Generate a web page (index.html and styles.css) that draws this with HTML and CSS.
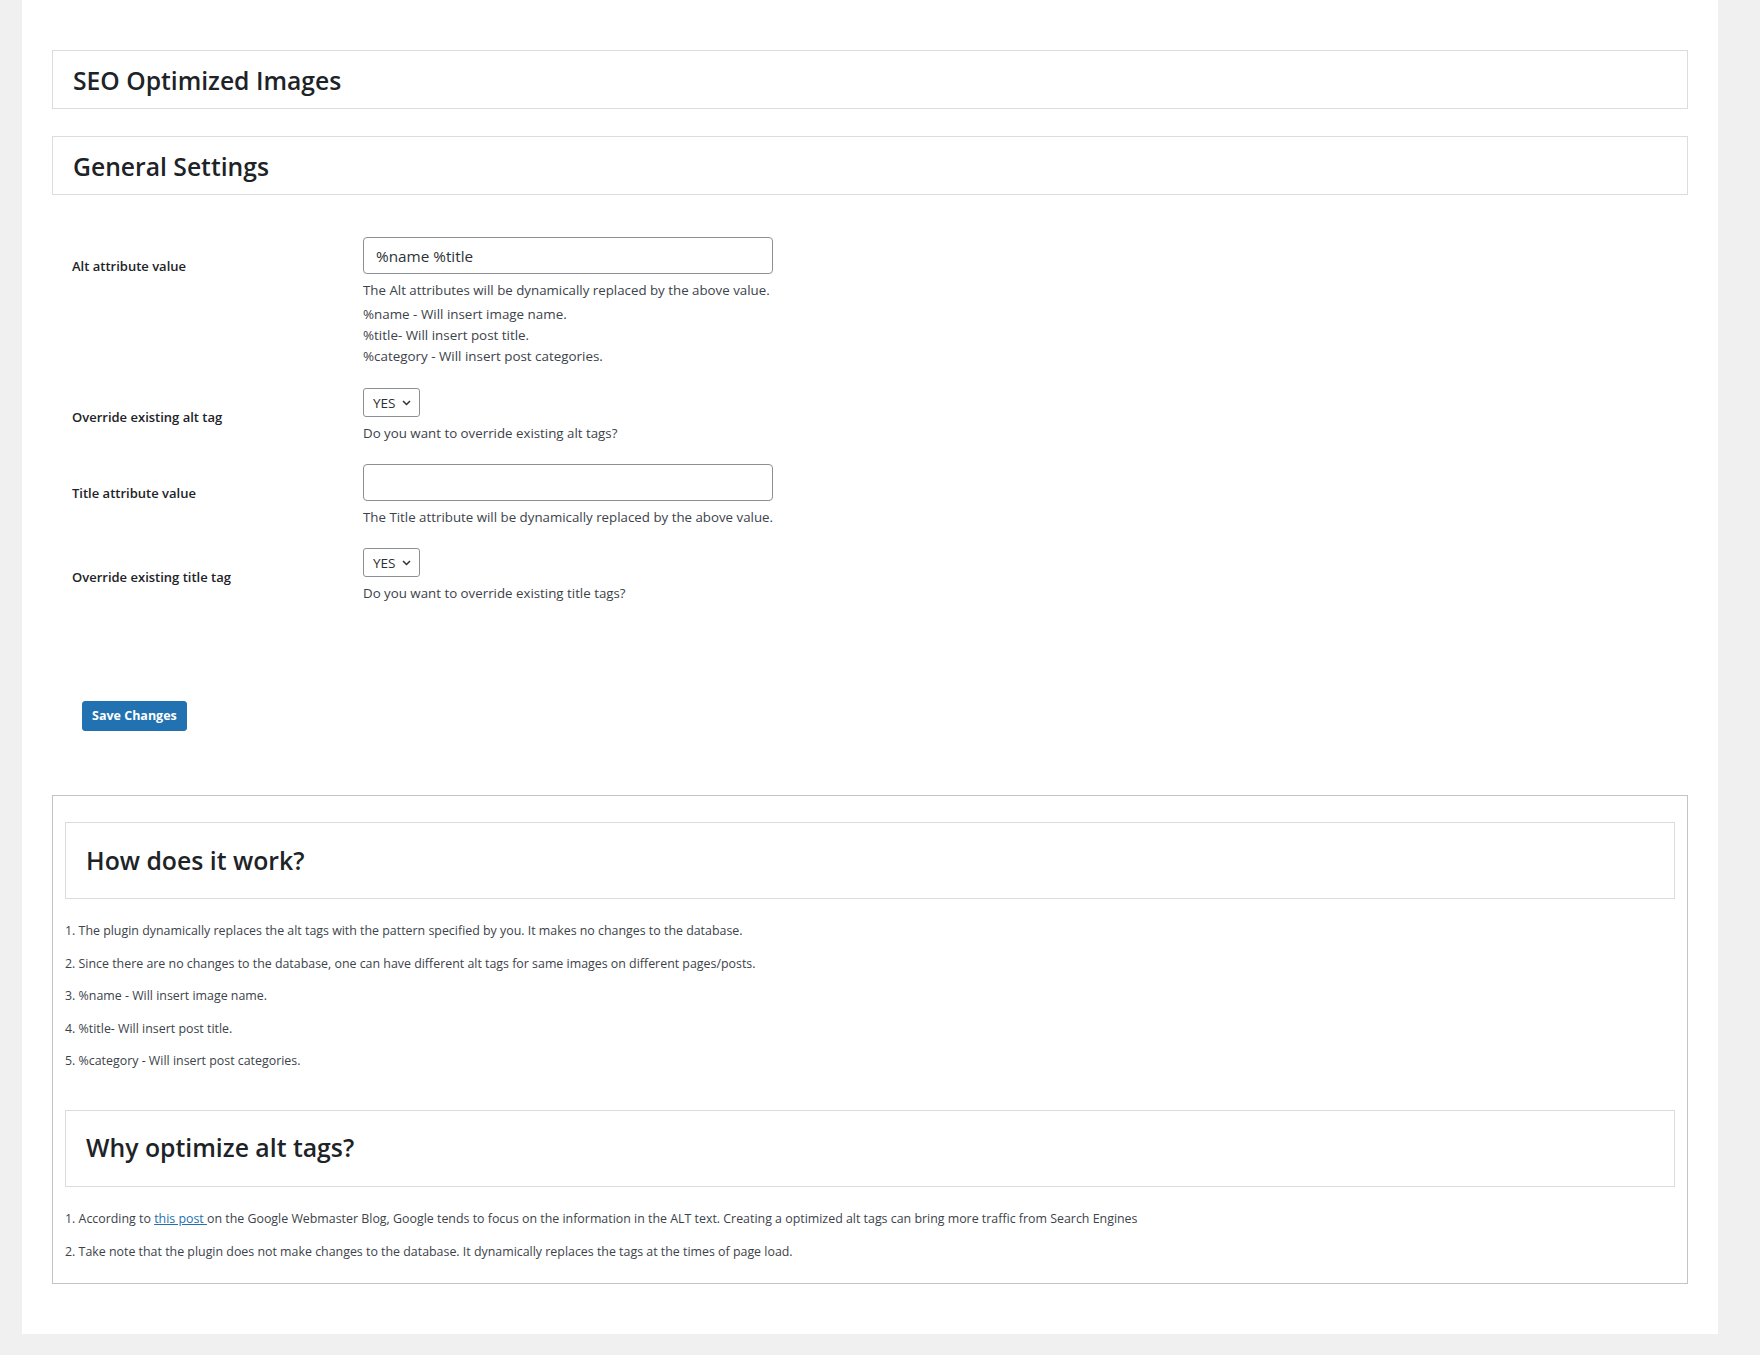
FILE: index.html
```html
<!DOCTYPE html>
<html>
<head>
<meta charset="utf-8">
<title>SEO Optimized Images</title>
<link rel="stylesheet" href="styles.css">
</head>
<body>
<div class="wrap">
  <div class="hbox"><h1 class="htitle">SEO Optimized Images</h1></div>
  <div class="hbox hbox-second"><h2 class="htitle">General Settings</h2></div>

  <form class="settings">
    <div class="row">
      <div class="label">Alt attribute value</div>
      <div class="field">
        <input class="text-input" type="text" value="%name %title">
        <p class="desc">The Alt attributes will be dynamically replaced by the above value.</p>
        <div class="vars">
          <div>%name - Will insert image name.</div>
          <div>%title- Will insert post title.</div>
          <div>%category - Will insert post categories.</div>
        </div>
      </div>
    </div>
    <div class="row">
      <div class="label">Override existing alt tag</div>
      <div class="field">
        <div class="select-wrap">
          <select class="select"><option>YES</option><option>NO</option></select>
          <svg class="chev" width="9" height="6" viewBox="0 0 9 6"><path d="M1 1l3.5 3.5L8 1" fill="none" stroke="#2c3338" stroke-width="1.5"/></svg>
        </div>
        <p class="desc">Do you want to override existing alt tags?</p>
      </div>
    </div>
    <div class="row">
      <div class="label">Title attribute value</div>
      <div class="field">
        <input class="text-input" type="text" value="">
        <p class="desc">The Title attribute will be dynamically replaced by the above value.</p>
      </div>
    </div>
    <div class="row">
      <div class="label">Override existing title tag</div>
      <div class="field">
        <div class="select-wrap">
          <select class="select"><option>YES</option><option>NO</option></select>
          <svg class="chev" width="9" height="6" viewBox="0 0 9 6"><path d="M1 1l3.5 3.5L8 1" fill="none" stroke="#2c3338" stroke-width="1.5"/></svg>
        </div>
        <p class="desc">Do you want to override existing title tags?</p>
      </div>
    </div>
    <div class="submit-row">
      <button class="btn" type="button">Save Changes</button>
    </div>
  </form>

  <div class="info">
    <div class="ibox"><h2 class="ititle">How does it work?</h2></div>
    <div class="ilist">
      <p>1. The plugin dynamically replaces the alt tags with the pattern specified by you. It makes no changes to the database.</p>
      <p>2. Since there are no changes to the database, one can have different alt tags for same images on different pages/posts.</p>
      <p>3. %name - Will insert image name.</p>
      <p>4. %title- Will insert post title.</p>
      <p>5. %category - Will insert post categories.</p>
    </div>
    <div class="ibox ibox-second"><h2 class="ititle">Why optimize alt tags?</h2></div>
    <div class="ilist ilist-last">
      <p>1. According to <a href="#">this post </a>on the Google Webmaster Blog, Google tends to focus on the information in the ALT text. Creating a optimized alt tags can bring more traffic from Search Engines</p>
      <p>2. Take note that the plugin does not make changes to the database. It dynamically replaces the tags at the times of page load.</p>
    </div>
  </div>
</div>
</body>
</html>
```

FILE: styles.css
```css
html, body {
  margin: 0;
  padding: 0;
  background: #f0f0f1;
  font-family: "Open Sans", "Noto Sans", "Liberation Sans", sans-serif;
  color: #3c434a;
}

.wrap {
  margin-left: 22px;
  width: 1696px;
  box-sizing: border-box;
  background: #fff;
  padding: 50px 30px 50px 30px;
}

.hbox {
  height: 59px;
  box-sizing: border-box;
  border: 1px solid #dcdcde;
  display: flex;
  align-items: center;
  padding: 2px 20px 0 20px;
}

.hbox-second {
  margin-top: 27px;
}

.htitle {
  margin: 0;
  font-size: 24.7px;
  font-weight: 600;
  color: #1d2327;
  line-height: 1.2;
}

.settings {
  margin-top: 42px;
  padding-left: 20px;
  display: flex;
  flex-direction: column;
  gap: 21px;
}

.row {
  display: grid;
  grid-template-columns: 291px 1fr;
}

.label {
  font-size: 13px;
  font-weight: 600;
  color: #1d2327;
  line-height: 18px;
  padding-top: 20px;
}

.field {
  display: flex;
  flex-direction: column;
  align-items: flex-start;
}

.text-input {
  width: 410px;
  height: 37px;
  box-sizing: border-box;
  border: 1px solid #8c8f94;
  border-radius: 4px;
  padding: 0 12px;
  font-family: inherit;
  font-size: 15.3px;
  color: #2c3338;
  background: #fff;
  margin: 0;
}

.desc {
  margin: 6px 0 0 0;
  font-size: 13.3px;
  line-height: 20px;
  color: #3c434a;
}

.vars {
  margin-top: 4px;
  font-size: 13.4px;
  line-height: 21px;
  color: #3c434a;
}

.select-wrap {
  position: relative;
  width: 57px;
  height: 29px;
}

.select {
  appearance: none;
  -webkit-appearance: none;
  width: 57px;
  height: 29px;
  box-sizing: border-box;
  border: 1px solid #8c8f94;
  border-radius: 3px;
  background: #fff;
  padding: 0 0 0 9px;
  margin: 0;
  font-family: inherit;
  font-size: 13.5px;
  color: #2c3338;
}

.chev {
  position: absolute;
  left: 39px;
  top: 12px;
  pointer-events: none;
}

.submit-row {
  margin-top: 77px;
  margin-left: 10px;
}

.btn {
  height: 30px;
  padding: 0 9px;
  background: #2271b1;
  border: 1px solid #2271b1;
  border-radius: 3px;
  color: #fff;
  font-family: inherit;
  font-size: 12.5px;
  font-weight: 700;
  line-height: 28px;
}

.info {
  margin-top: 64px;
  border: 1px solid #c3c4c7;
  padding: 26px 12px 7px 12px;
}

.ibox {
  height: 77px;
  box-sizing: border-box;
  border: 1px solid #dcdcde;
  display: flex;
  align-items: center;
  padding: 0 20px;
}

.ibox-second {
  margin-top: 39px;
}

.ititle {
  margin: 0;
  font-size: 24.8px;
  font-weight: 600;
  color: #1d2327;
  line-height: 1.2;
}

.ilist {
  margin-top: 22px;
}

.ilist p {
  margin: 0 0 13px 0;
  font-size: 12.4px;
  line-height: 19.5px;
  color: #3c434a;
}

.ilist-last p {
  margin-bottom: 14px;
}

.ilist a {
  color: #2271b1;
  text-decoration: underline;
}
```
